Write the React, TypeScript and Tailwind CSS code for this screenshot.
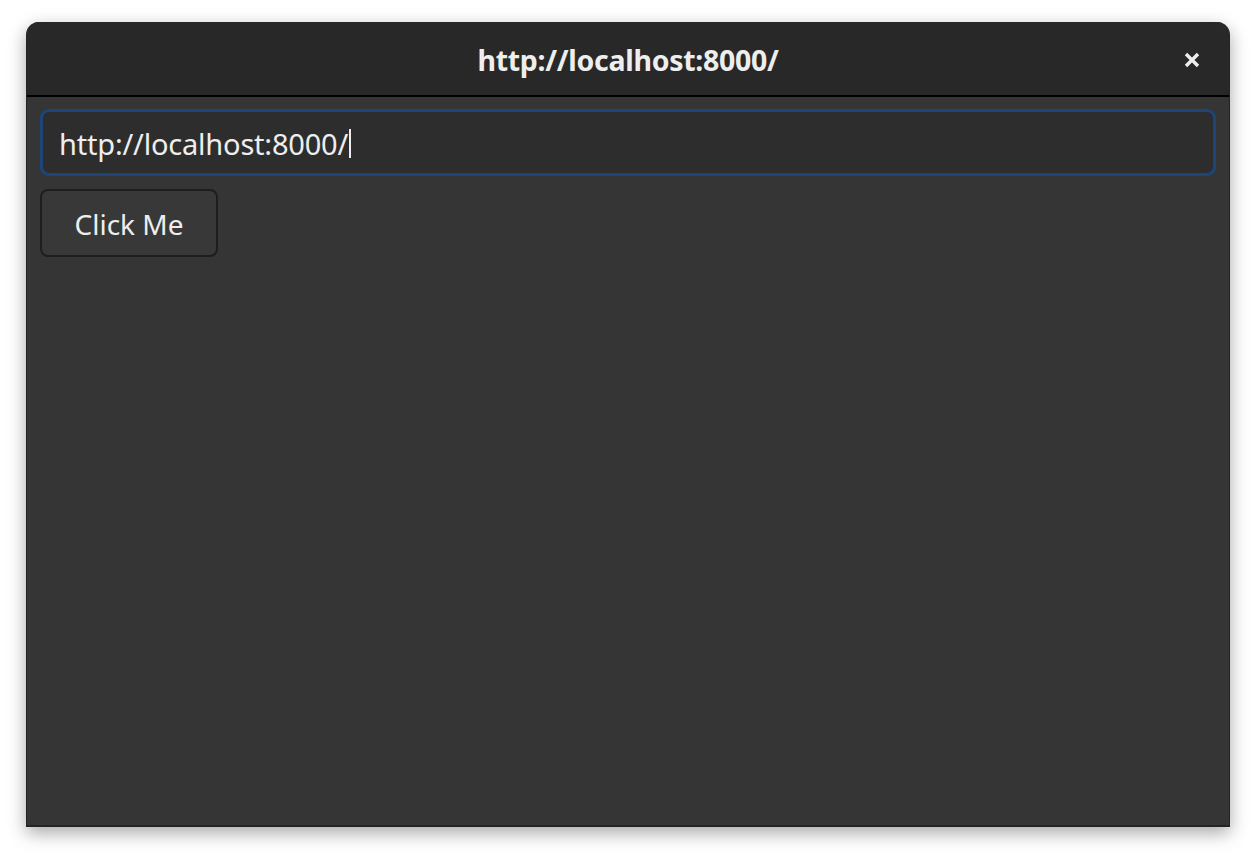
import React from "react";

function CloseIcon() {
  return (
    <svg width="16" height="16" viewBox="0 0 16 16" fill="none">
      <path d="M2 2L14 14M14 2L2 14" stroke="#eeeeee" strokeWidth="3.4" strokeLinecap="butt" />
    </svg>
  );
}

export default function App() {
  return (
    <div
      className="w-[1256px] h-[858px] bg-white pt-[22px] pl-[26px]"
      style={{ fontFamily: '"Noto Sans", "Open Sans", sans-serif' }}
    >
      <div className="w-[1204px] h-[805px] flex flex-col rounded-t-[13px] bg-[#353535] border border-[#242424] border-t-0 border-b-2 shadow-[0_6px_18px_rgba(0,0,0,0.35)] overflow-hidden">
        {/* Header bar */}
        <div className="h-[75px] shrink-0 bg-[#282828] border-b-2 border-black relative flex items-center justify-center pt-[3px]">
          <span className="text-[28.5px] leading-none font-bold text-[#eeeeee] tracking-[-0.3px]">http://localhost:8000/</span>
          <button className="absolute right-[29px] top-[30px]">
            <CloseIcon />
          </button>
        </div>

        {/* Content */}
        <div className="flex flex-col items-start gap-[13px] pt-[12px] px-[13px]">
          <div className="w-full h-[67px] rounded-[9px] border-[3px] border-[#1d4577] bg-[#2d2d2d] flex items-center pl-[16px] pt-[2px]">
            <span className="text-[29px] leading-none text-[#eeeeee] tracking-[-0.2px]">http://localhost:8000/</span>
            <span className="w-[1.5px] h-[29px] bg-[#eeeeee] ml-[1px]" />
          </div>
          <button className="w-[178px] h-[68px] rounded-[8px] border-2 border-[#1e1e1e] bg-[#383838] text-[28px] leading-none text-[#eeeeee] pt-[2px]">
            Click Me
          </button>
        </div>
      </div>
    </div>
  );
}
